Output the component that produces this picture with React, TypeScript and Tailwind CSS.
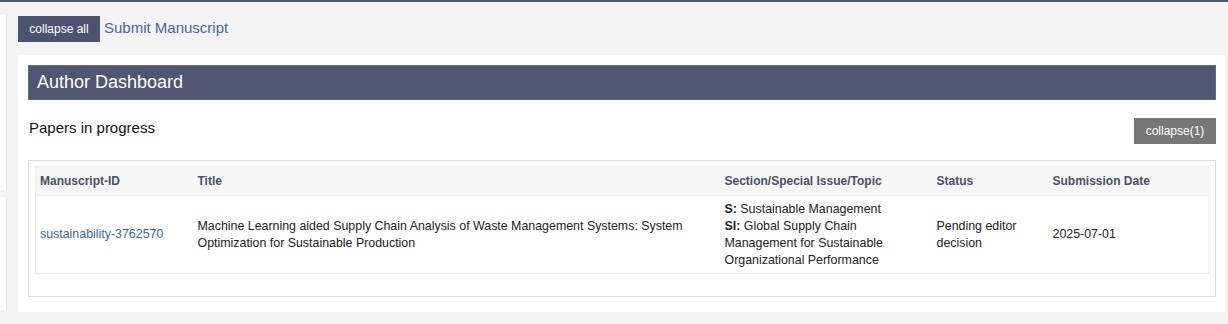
const papers = [
  {
    id: "sustainability-3762570",
    title:
      "Machine Learning aided Supply Chain Analysis of Waste Management Systems: System Optimization for Sustainable Production",
    section: "Sustainable Management",
    issue: "Global Supply Chain Management for Sustainable Organizational Performance",
    status: "Pending editor decision",
    date: "2025-07-01",
  },
]

const columns = [
  { label: "Manuscript-ID", width: "w-[158px]", pad: "pl-[4px]" },
  { label: "Title", width: "w-[527px]", pad: "pl-[4px]" },
  { label: "Section/Special Issue/Topic", width: "w-[212px]", pad: "pl-[4px]" },
  { label: "Status", width: "w-[116px]", pad: "pl-[4px]" },
  { label: "Submission Date", width: "w-[160px]", pad: "pl-[4px]" },
]

export default function App() {
  return (
    <div className="flex h-[324px] w-[1228px] overflow-hidden border-t-2 border-[#4d5570] bg-[#f3f3f4] font-['Liberation_Sans',Arial,sans-serif] text-[#222]">
      {/* sliver of the side panel */}
      <aside className="flex w-[7px] shrink-0 flex-col gap-[7px] pt-[13px]">
        <div className="h-[175px] border-r border-[#e4e4e6] bg-white" />
        <div className="h-[113px] border-r border-[#e4e4e6] bg-white" />
      </aside>

      <main className="ml-[11px] mr-[4px] flex-1 pt-[14px]">
        <div className="flex h-[26px] items-center gap-[4px]">
          <button className="h-[26px] w-[82px] bg-[#4b5370] text-[12px] text-white">collapse all</button>
          <a className="-mt-[2px] text-[15px] text-[#4366a4]">Submit Manuscript</a>
        </div>

        <section className="mt-[13px] h-[257px] bg-white p-[10px] pr-[9px]">
          <div className="flex h-[35px] items-center border border-[#626a84] bg-[#4f5672] pl-[8px] text-[18px] text-white">
            Author Dashboard
          </div>

          <div className="mt-[18px] flex h-[26px] items-center justify-between">
            <p className="-mt-[6px] pl-[1px] text-[15px] text-[#111]">Papers in progress</p>
            <button className="h-[26px] w-[82px] bg-[#777777] text-[12px] text-white">collapse(1)</button>
          </div>

          <div className="mt-[16px] border border-[#dcdcdc] px-[6px] pb-[22px] pt-[5px]">
            <table className="w-full table-fixed border-collapse border border-[#eeeeee] text-[12px]">
              <colgroup>
                {columns.map((c) => (
                  <col key={c.label} className={c.width} />
                ))}
              </colgroup>
              <thead>
                <tr className="h-[29px] bg-[#f6f6f7]">
                  {columns.map((c) => (
                    <th key={c.label} className={`${c.pad} text-left font-bold text-[#4a5068]`}>
                      {c.label}
                    </th>
                  ))}
                </tr>
              </thead>
              <tbody>
                {papers.map((p) => (
                  <tr key={p.id} className="h-[78px] border-t border-[#eeeeee] align-middle text-[12.4px] leading-[17px]">
                    <td className="pl-[4px] text-[#4066a6]">{p.id}</td>
                    <td className="pl-[4px] pr-[20px]">{p.title}</td>
                    <td className="pl-[4px] pr-[14px]">
                      <b>S:</b> {p.section}
                      <br />
                      <b>SI:</b> {p.issue}
                    </td>
                    <td className="pl-[4px] pr-[20px]">{p.status}</td>
                    <td className="pl-[4px]">{p.date}</td>
                  </tr>
                ))}
              </tbody>
            </table>
          </div>
        </section>
      </main>
    </div>
  )
}
